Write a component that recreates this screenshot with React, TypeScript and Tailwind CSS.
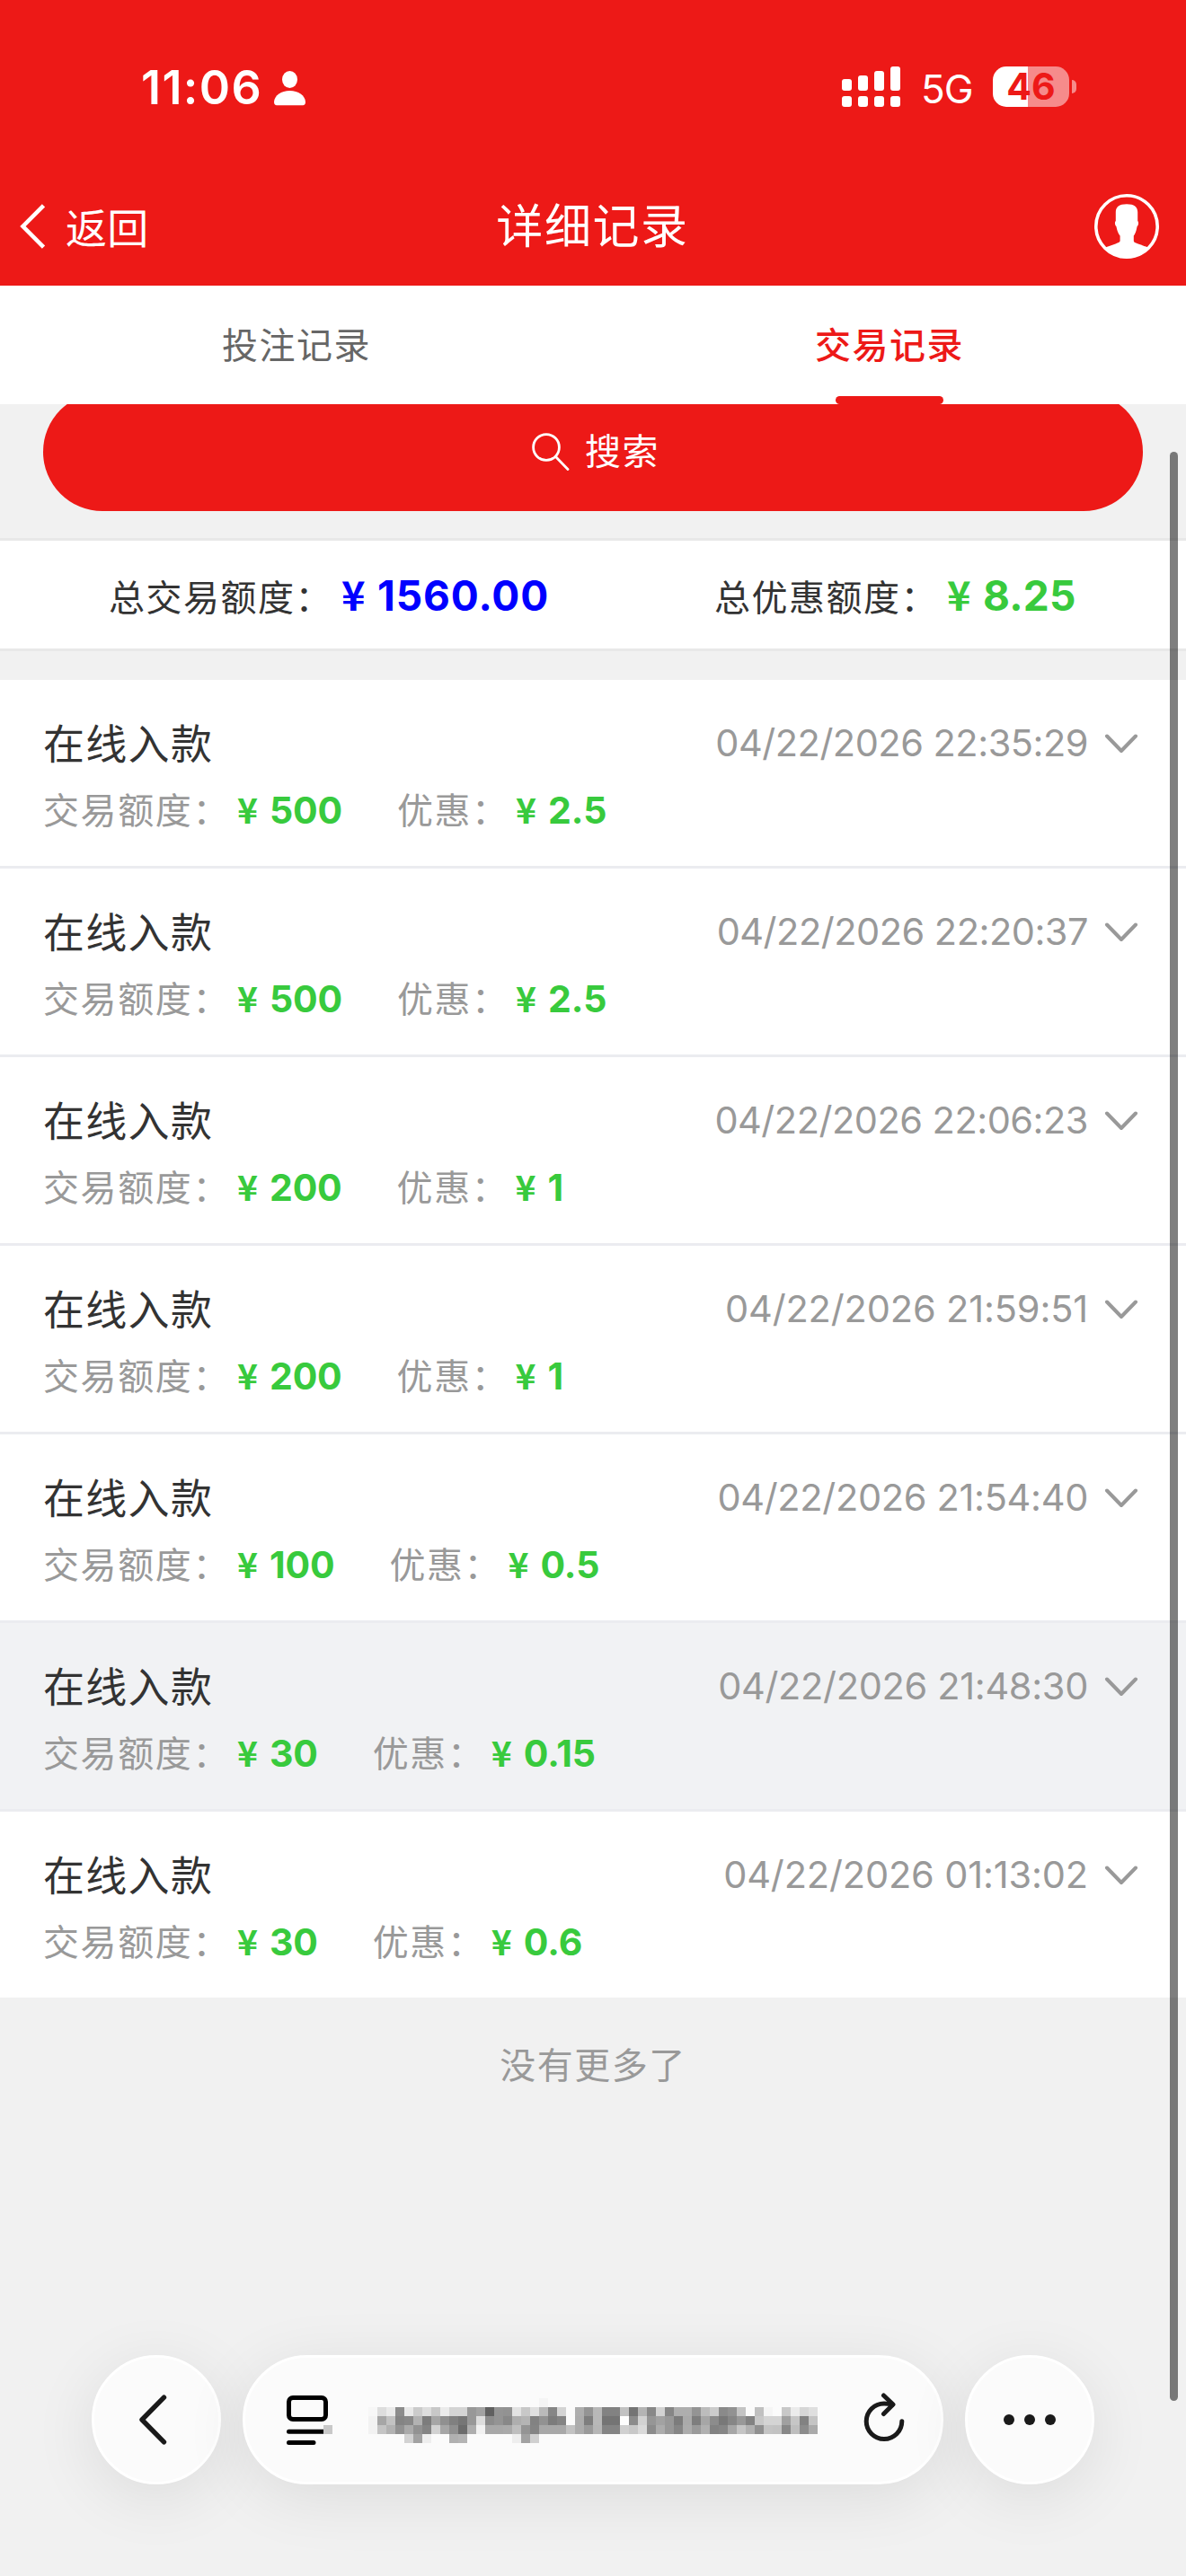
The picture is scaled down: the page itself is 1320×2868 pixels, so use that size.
import { clsx } from 'clsx';

type Transaction = {
  id: number;
  time: string;
  amount: string;
  bonus: string;
  active?: boolean;
};

const TRANSACTIONS: Transaction[] = [
  { id: 1, time: '04/22/2026 22:35:29', amount: '500', bonus: '2.5' },
  { id: 2, time: '04/22/2026 22:20:37', amount: '500', bonus: '2.5' },
  { id: 3, time: '04/22/2026 22:06:23', amount: '200', bonus: '1' },
  { id: 4, time: '04/22/2026 21:59:51', amount: '200', bonus: '1' },
  { id: 5, time: '04/22/2026 21:54:40', amount: '100', bonus: '0.5' },
  { id: 6, time: '04/22/2026 21:48:30', amount: '30', bonus: '0.15', active: true },
  { id: 7, time: '04/22/2026 01:13:02', amount: '30', bonus: '0.6' },
];

// The digit 1 is narrow, so timestamps are tightened less the more of them they hold
const DATE_TRACKING = ['tracking-[-0.5px]', 'tracking-[-0.33px]', 'tracking-[-0.15px]'];
const dateTracking = (time: string) => DATE_TRACKING[Math.min(time.split('1').length - 1, 2)];

// Grey levels of the censored address, one hex pair per 10px block
const MOSAIC = [
  '......................................f5............................................................',
  'f7ddea8ce8cbddc8ebd4d498a2609492e2c8e0ba86d4..ae94b88282c274b488d286aeae94bccc8a92c4..c0f5..c8ebd6df',
  'f2a6c28488b27ca690807698dd8c9488aeb482927c84..ac7eb87474fe8cd296a2987caa7ea68c78869882c8d4d4a0c682c4',
  'f2c4b292aa9284d2a6906caef2a8a8aabe9484a8a8a8c2ac9ab68484d0c8da8cac9886ac9ab08286a6c4b090c4c288be8caa',
  '........d2a2ee....b0b4..........eea2d0..............................................................',
];

const Mosaic = () => (
  <svg width="500" height="50" viewBox="0 0 500 50" shapeRendering="crispEdges">
    {MOSAIC.map((row, y) =>
      (row.match(/../g) ?? []).map((level, x) =>
        level === '..' ? null : (
          <rect key={`${x}-${y}`} x={x * 10} y={y * 10} width="10" height="10" fill={`#${level}${level}${level}`} />
        )
      )
    )}
  </svg>
);

const SIGNAL_TOPS = [14, 10, 5, 0];

const StatusBar = () => (
  <div className="flex h-[194px] items-start justify-between pl-[157px] pr-[122px] pt-[74px] text-white">
    <div className="flex h-[48px] items-center">
      <span className="w-[148px] text-[52px] font-semibold leading-[48px] tracking-[1.4px]">11:06</span>
      <svg width="35" height="39" viewBox="0 0 35 39" fill="currentColor" className="shrink-0">
        <ellipse cx="17.5" cy="9.5" rx="8.5" ry="9.5" />
        <path d="M0 34.5C0.5 27 8 22 17.5 22S34.5 27 35 34.5C35 37 33.8 38.2 32 38.2H3C1.2 38.2 0 37 0 34.5Z" />
      </svg>
    </div>
    <div className="flex h-[45px] items-center">
      <svg width="65" height="45" viewBox="0 0 65 45" fill="currentColor">
        {SIGNAL_TOPS.map((top, i) => (
          <g key={top}>
            <rect x={i * 18} y={top} width="11" height={27 - top} rx="3" />
            <rect x={i * 18} y="33" width="11" height="12" rx="3" />
          </g>
        ))}
      </svg>
      <span className="ml-[23px] mt-[5px] w-[80px] text-[44px] leading-[45px] tracking-[-1px]">5G</span>
      <div className="flex h-[45px] w-[85px] items-center justify-center rounded-[15px] bg-linear-to-r from-white from-[46%] to-[#f68b8b] to-[46%] text-[41px] font-bold leading-[45px] text-[#ed1917]">
        46
      </div>
      <div className="ml-[3px] h-[15px] w-[5px] rounded-r-full bg-[#f68b8b]" />
    </div>
  </div>
);

const NavBar = () => (
  <div className="grid h-[124px] grid-cols-3 items-center pl-[22px] pr-[30px] pb-[8px] text-white">
    <div className="flex items-center">
      <svg width="30" height="50" viewBox="0 0 30 50" fill="none" stroke="currentColor" strokeWidth="4.6">
        <path d="M26.5 1.8L3.5 25L26.5 48.2" />
      </svg>
      <span className="ml-[21px] mt-[3px] text-[46px] leading-[60px] tracking-[0.2px]">返回</span>
    </div>
    <h1 className="pl-[7px] pt-[1px] text-center text-[52px] leading-[60px] tracking-[1.6px]">详细记录</h1>
    <svg width="72" height="72" viewBox="0 0 72 72" className="justify-self-end">
      <circle cx="36" cy="36" r="34.2" fill="none" stroke="currentColor" strokeWidth="3.6" />
      <path
        d="M23.8 30V20C24 14 27.5 11.2 36 11.2S48 14 48.2 20V30C49.6 31 49.2 35 47.6 36C46.8 40.5 45.5 44.5 43.8 46.5V52C43.8 54 46 54.6 59.5 59.2C53 67.5 45.5 71.5 36 71.5S19 67.5 12.8 59.2C26 54.6 28.6 54 28.6 52V46.5C26.8 44.5 25.2 40.5 24.4 36C22.8 35 22.4 31 23.8 30Z"
        fill="currentColor"
      />
    </svg>
  </div>
);

const Tabs = () => (
  <div className="grid h-[132px] grid-cols-2 bg-white text-[40px] tracking-[1.5px]">
    <div className="flex items-center justify-center pt-[1px] text-[#666]">投注记录</div>
    <div className="relative flex items-center justify-center pt-[1px] font-medium text-[#ed1917]">
      交易记录
      <span className="absolute bottom-0 left-1/2 h-[9px] w-[120px] -translate-x-1/2 rounded-full bg-[#ed1917]" />
    </div>
  </div>
);

const SearchButton = () => (
  <div className="h-[149px] overflow-hidden px-[48px]">
    <button className="-mt-[13px] flex h-[132px] w-full items-center justify-center rounded-full bg-[#ed1917] pl-[6px] text-[40px] tracking-[1.5px] text-white">
      <svg width="42" height="42" viewBox="0 0 42 42" fill="none" stroke="currentColor" strokeWidth="2.8" className="mr-[17px]">
        <circle cx="16" cy="16" r="14.4" />
        <path d="M26.5 26.5L40 40.5" strokeLinecap="round" />
      </svg>
      搜索
    </button>
  </div>
);

const Money = ({ value, large = false }: { value: string; large?: boolean }) => (
  <span className={clsx('flex items-baseline font-bold', large ? 'text-[46px]' : 'text-[41px]')}>
    <span
      className={clsx(
        "font-['Noto_Sans_CJK_SC',sans-serif] font-bold",
        large ? 'w-[40px] text-[45px]' : 'w-[36px] text-[39px]'
      )}
    >
      ¥
    </span>
    {value}
  </span>
);

const Summary = () => (
  <div className="flex h-[126px] items-center border-y-[3px] border-[#e8e8e8] bg-white pl-[121px] text-[40px] tracking-[1.5px] text-[#333]">
    <div className="flex w-[674px] items-baseline">
      <span className="w-[259px] whitespace-nowrap">总交易额度：</span>
      <div className="tracking-[0.9px] text-[#0000ff]">
        <Money value="1560.00" large />
      </div>
    </div>
    <div className="flex items-baseline">
      <span className="w-[259px] whitespace-nowrap">总优惠额度：</span>
      <div className="tracking-[0.2px] text-[#38ca3d]">
        <Money value="8.25" large />
      </div>
    </div>
  </div>
);

const TransactionRow = ({ item }: { item: Transaction }) => (
  <li
    className={clsx(
      'h-[210px] border-b-[3px] border-[#ebecf0] pl-[48px] pr-[53px] pt-[42px] last:border-[#f1f1f1]',
      item.active ? 'bg-[#f1f2f4]' : 'bg-white'
    )}
  >
    <div className="flex h-[58px] items-center">
      <span className="text-[46px] tracking-[1.3px] text-[#333]">在线入款</span>
      <span className={clsx('-mt-[2px] ml-auto text-[41.5px] text-[#999]', dateTracking(item.time))}>{item.time}</span>
      <svg width="38" height="22" viewBox="0 0 38 22" fill="none" stroke="#999" strokeWidth="4" strokeLinecap="round" strokeLinejoin="round" className="ml-[18px]">
        <path d="M3 2.5L19 19L35 2.5" />
      </svg>
    </div>
    <div className="mt-[14px] flex h-[58px] items-baseline text-[40px] tracking-[1.6px] text-[#999]">
      <span className="w-[216px] whitespace-nowrap">交易额度：</span>
      <div className="tracking-[-0.2px] text-[#38ca3d]">
        <Money value={item.amount} />
      </div>
      <span className="ml-[61px] w-[132px] whitespace-nowrap">优惠：</span>
      <div className="text-[#38ca3d] tracking-normal">
        <Money value={item.bonus} />
      </div>
    </div>
  </li>
);

const BrowserBar = () => (
  <div className="flex gap-[24px] pl-[102px] text-[#1a1a1a]">
    <button className="flex size-[144px] items-center justify-center rounded-full border-[3px] border-white bg-[#fbfbfb] pr-[7px] shadow-[0_14px_72px_rgba(0,0,0,0.09)]">
      <svg width="34" height="56" viewBox="0 0 34 56" fill="none" stroke="currentColor" strokeWidth="5.4" strokeLinecap="round" strokeLinejoin="round">
        <path d="M28.5 3.2L4 28L28.5 52.8" />
      </svg>
    </button>
    <div className="flex h-[144px] w-[780px] items-center rounded-full border-[3px] border-white bg-[#fbfbfb] pl-[46px] pr-[38px] shadow-[0_14px_72px_rgba(0,0,0,0.09)]">
      <svg width="52" height="56" viewBox="0 0 52 56" fill="none" stroke="#000" strokeWidth="5" strokeLinecap="round">
        <rect x="2.5" y="3.5" width="41" height="24" rx="4.5" />
        <path d="M2.5 41.2H41M2.5 53.5H30" />
        <path d="M41 34H51V44H41Z" fill="#c8c8c8" stroke="none" />
      </svg>
      <div className="ml-[39px] mt-[2px]">
        <Mosaic />
      </div>
      <svg width="50" height="58" viewBox="0 0 50 58" fill="none" stroke="currentColor" strokeWidth="5" strokeLinecap="round" strokeLinejoin="round" className="-mt-[2px] ml-auto">
        <path d="M34 13.5C31 12.3 28.5 11.9 25 11.9A19.8 19.8 0 1 0 44.8 31.7" />
        <path d="M24.5 3L35 13L24.5 23.5" />
      </svg>
    </div>
    <button className="flex size-[144px] items-center justify-center gap-[11px] rounded-full border-[3px] border-white bg-[#fbfbfb] shadow-[0_14px_72px_rgba(0,0,0,0.09)]">
      <span className="size-[12px] rounded-full bg-current" />
      <span className="size-[12px] rounded-full bg-current" />
      <span className="size-[12px] rounded-full bg-current" />
    </button>
  </div>
);

export default function App() {
  return (
    <div className="relative flex h-[2868px] w-[1320px] flex-col overflow-hidden bg-[#f1f1f1] font-['Inter','Noto_Sans_CJK_SC',sans-serif]">
      <header className="bg-[#ed1917]">
        <StatusBar />
        <NavBar />
      </header>
      <Tabs />
      <SearchButton />
      <Summary />
      <ul className="mt-[32px]">
        {TRANSACTIONS.map((item) => (
          <TransactionRow key={item.id} item={item} />
        ))}
      </ul>
      <p className="mt-[43px] text-center text-[40px] leading-[60px] tracking-[1.5px] text-[#999]">没有更多了</p>
      <div className="mb-[102px] mt-auto">
        <BrowserBar />
      </div>
      <div className="absolute right-[9px] top-[503px] h-[2170px] w-[9px] rounded-full bg-black/50" />
    </div>
  );
}
